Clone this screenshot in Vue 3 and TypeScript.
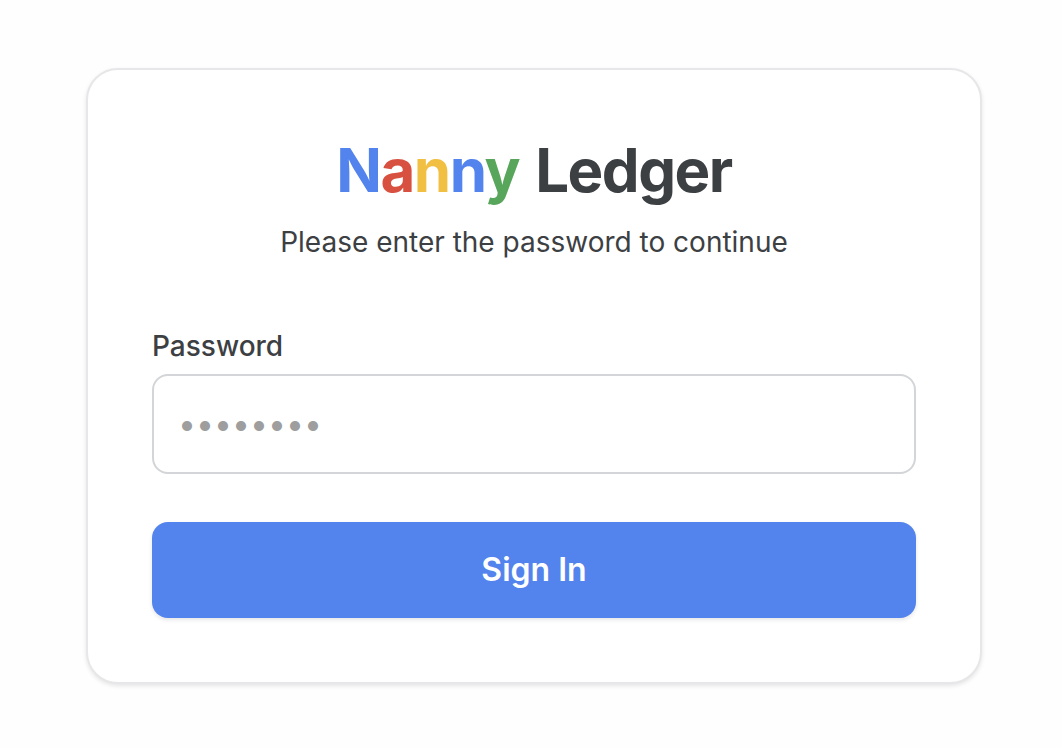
<script setup lang="ts">
import { ref } from 'vue'

const password = ref<string>('')
const letters: { char: string; tone: string }[] = [
  { char: 'N', tone: 'blue' },
  { char: 'a', tone: 'red' },
  { char: 'n', tone: 'yellow' },
  { char: 'n', tone: 'blue' },
  { char: 'y', tone: 'green' },
]
</script>

<template>
  <main class="page">
    <section class="card">
      <header class="heading">
        <h1 class="title">
          <span><span v-for="(l, i) in letters" :key="i" :class="l.tone">{{ l.char }}</span></span>
          <span>Ledger</span>
        </h1>
        <p class="subtitle">Please enter the password to continue</p>
      </header>
      <form class="form" @submit.prevent>
        <label class="label" for="password">Password</label>
        <input id="password" v-model="password" class="field" type="password" placeholder="••••••••" />
        <button class="submit" type="submit">Sign In</button>
      </form>
    </section>
  </main>
</template>

<style>
body {
  margin: 0;
  background: #fefefe;
}
</style>

<style scoped>
.page {
  box-sizing: border-box;
  min-height: 100vh;
  padding: 68px 80px 62px 86px;
  font-family: Inter, 'Liberation Sans', sans-serif;
  color: #3c4043;
}
.card {
  box-sizing: border-box;
  padding: 64px;
  border: 2px solid #e7e7e9;
  border-radius: 32px;
  background: #fff;
  box-shadow: 0 2px 4px rgba(0, 0, 0, 0.1);
}
.heading {
  text-align: center;
}
.title {
  display: flex;
  justify-content: center;
  gap: 16px;
  margin: 0;
  font-size: 60px;
  line-height: 72px;
  font-weight: 700;
  letter-spacing: -1.5px;
}
.blue { color: #5383ec; }
.red { color: #d85140; }
.yellow { color: #f1bf42; }
.green { color: #58a55c; }
.subtitle {
  margin: 16px 0 0;
  font-size: 28px;
  line-height: 40px;
}
.form {
  display: flex;
  flex-direction: column;
  margin-top: 64px;
}
.label {
  font-size: 28px;
  line-height: 40px;
  font-weight: 500;
}
.field {
  box-sizing: border-box;
  height: 100px;
  margin-top: 8px;
  padding: 0 24px 2px;
  border: 2px solid #d3d5d8;
  border-radius: 16px;
  background: #fff;
  color: #3c4043;
  font-family: inherit;
  font-size: 32px;
  outline: none;
}
.field::placeholder {
  color: #9e9e9e;
  opacity: 1;
}
.submit {
  height: 96px;
  margin-top: 48px;
  padding: 0 24px 2px;
  border: 0;
  border-radius: 16px;
  background: #5383ec;
  color: #fff;
  font-family: inherit;
  font-size: 32px;
  font-weight: 600;
  box-shadow: 0 2px 4px rgba(0, 0, 0, 0.1);
}
</style>
